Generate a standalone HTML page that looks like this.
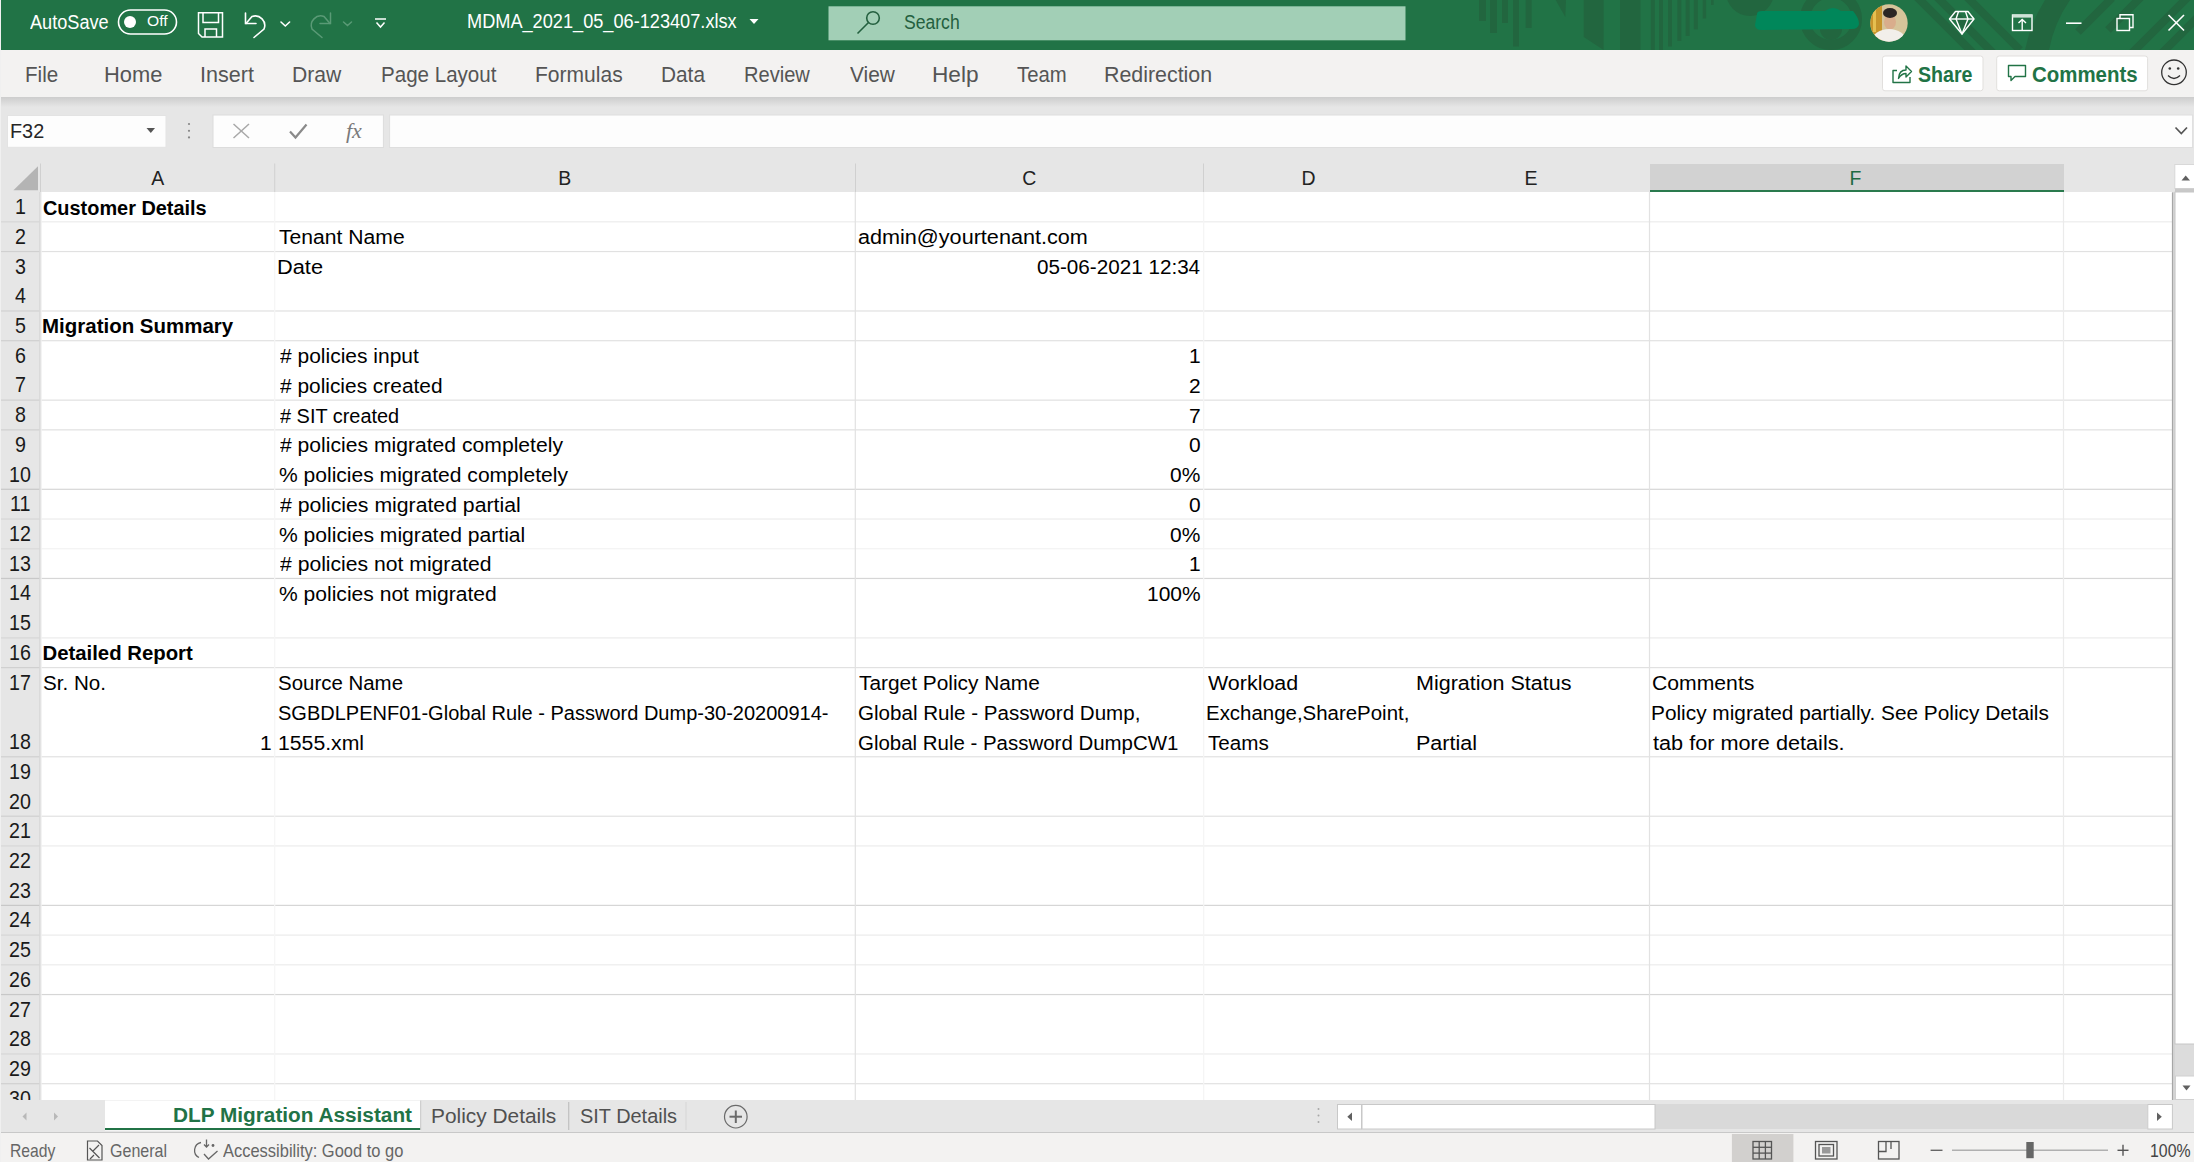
<!DOCTYPE html>
<html><head><meta charset="utf-8">
<style>
html,body{margin:0;padding:0;}
body{width:2194px;height:1162px;overflow:hidden;position:relative;background:#fff;font-family:"Liberation Sans",sans-serif;}
.a{position:absolute;}
.t{position:absolute;white-space:nowrap;line-height:1;transform-origin:0 0;font-family:"Liberation Sans",sans-serif;}
svg{position:absolute;overflow:visible;}
</style></head><body>
<!-- title bar -->
<div class="a" style="left:0;top:0;width:2194px;height:50px;background:#217346"></div>
<div class="a" style="left:0;top:0;width:1px;height:1162px;background:#f0f0f0;z-index:5"></div>
<svg style="left:0;top:0" width="2194" height="50" viewBox="0 0 2194 50">
 <defs><clipPath id="tb"><rect x="0" y="0" width="2194" height="50"/></clipPath></defs>
 <g clip-path="url(#tb)" fill="#22663f">
  <rect x="1479" y="0" width="7" height="21"/>
  <rect x="1490" y="0" width="7" height="33"/>
  <rect x="1502" y="0" width="6" height="23"/>
  <rect x="1513" y="0" width="6" height="46.5"/>
  <rect x="1525.6" y="0" width="6" height="28"/>
  <polygon points="1555.7,0 1566,0 1565.3,17"/>
  <polygon points="1583.7,0 1603.6,0 1603.6,50 1583.7,37"/>
  <rect x="1620" y="0" width="20.5" height="50"/>
  <rect x="1650.8" y="0" width="4" height="50"/>
  <rect x="1659" y="0" width="4" height="50"/>
  <rect x="1668" y="0" width="4" height="46.5"/>
  <rect x="1677.4" y="0" width="4" height="41"/>
  <rect x="1685.6" y="0" width="4" height="36"/>
  <rect x="1693.8" y="0" width="4" height="29.4"/>
  <rect x="1702.7" y="0" width="3.4" height="18.5"/>
  <rect x="1711" y="0" width="2.6" height="5"/>
  <circle cx="1750" cy="-8" r="24"/>
  <circle cx="1831" cy="19" r="26" fill="none" stroke="#22663f" stroke-width="10"/>
  <circle cx="1831" cy="29" r="11"/>
  <path d="M2045,0 A150,150 0 0 0 2025,50 L2049,50 A130,130 0 0 1 2070,0 Z"/>
  <g stroke="#22663f" stroke-width="8" fill="none">
   <line x1="1915" y1="-5" x2="1975" y2="55"/>
   <line x1="1935" y1="-5" x2="1995" y2="55"/>
   <line x1="1960" y1="-10" x2="2020" y2="50"/>
   <line x1="2078" y1="32" x2="2112" y2="-2"/>
   <line x1="2108" y1="30" x2="2145" y2="-7"/>
   <line x1="2130" y1="55" x2="2190" y2="-5"/>
   <line x1="2160" y1="55" x2="2215" y2="0"/>
  </g>
 </g>
 <!-- autosave toggle -->
 <rect x="118.5" y="10" width="58" height="24" rx="12" fill="none" stroke="#fff" stroke-width="1.6"/>
 <circle cx="130" cy="22" r="6" fill="#fff"/>
 <!-- save icon -->
 <g fill="none" stroke="#fff" stroke-width="1.5">
  <path d="M198.5,12.8 H222.5 V37 H202 L198.5,33.5 Z"/>
  <path d="M203,12.8 V22.5 H218.5 V12.8"/>
  <path d="M205,37 V29 H216.5 V37"/>
 </g>
 <!-- undo -->
 <g fill="none" stroke="#fff" stroke-width="1.6" stroke-linecap="round">
  <path d="M246,23.5 L252,16.5 A9.5,9.5 0 0 1 264,29 L254,37.5"/>
  <path d="M245.5,13 V23.5 H256"/>
  <path d="M281,22 L285.3,26 L289.6,22"/>
 </g>
 <g fill="none" stroke="#5a9a76" stroke-width="1.5" stroke-linecap="round">
  <path d="M330,23.5 L324,16.5 A9.5,9.5 0 0 0 312,29 L322,37.5"/>
  <path d="M330.5,13 V23.5 H320"/>
  <path d="M343.5,22 L347.5,25.5 L351.5,22"/>
 </g>
 <g fill="none" stroke="#fff" stroke-width="1.5">
  <path d="M375,19 H386"/>
  <path d="M376.5,22.5 L380.5,27 L384.5,22.5"/>
 </g>
 <!-- filename dropdown -->
 <polygon points="749.5,19 758.5,19 754,24" fill="#fff"/>
 <!-- search box -->
 <rect x="828.5" y="6.3" width="577" height="34" fill="#a2cfb6"/>
 <g fill="none" stroke="#24603f" stroke-width="1.6">
  <circle cx="873" cy="18" r="6.3"/>
  <line x1="868.5" y1="22.5" x2="857.5" y2="33.5"/>
 </g>
 <!-- redacted blob -->
 <path d="M1757,14 Q1757,11 1762,11 L1825,11 Q1833,5 1841,11 L1853,11 Q1859,18 1859,24 Q1858,29 1852,29 L1762,30 Q1755,30 1755,25 Z" fill="#00875a"/>
 <!-- avatar -->
 <defs><clipPath id="av"><circle cx="1889" cy="23" r="18.7"/></clipPath></defs>
 <g clip-path="url(#av)">
  <rect x="1870" y="4" width="38" height="38" fill="#d6c49a"/>
  <rect x="1870" y="4" width="12" height="38" fill="#c7952c"/>
  <rect x="1873" y="10" width="3" height="22" fill="#e6bf50"/>
  <ellipse cx="1890" cy="22" rx="6" ry="7.5" fill="#d9ad8c"/>
  <ellipse cx="1890" cy="13" rx="7" ry="5" fill="#2c2624"/>
  <ellipse cx="1889" cy="41" rx="17" ry="12" fill="#f2efea"/>
 </g>
 <!-- diamond -->
 <g fill="none" stroke="#fff" stroke-width="1.4" stroke-linejoin="round">
  <path d="M1955.5,11.5 H1968 L1974,19 L1962,34 L1949.5,19 Z"/>
  <path d="M1949.5,19 H1974"/>
  <path d="M1958.5,11.5 L1956,19 L1962,34 L1968,19 L1965.5,11.5"/>
 </g>
 <!-- present -->
 <g fill="none" stroke="#fff" stroke-width="1.4">
  <rect x="2012.5" y="15" width="19.5" height="15.5"/>
  <line x1="2022.2" y1="19.5" x2="2022.2" y2="30"/>
  <path d="M2018.5,23 L2022.2,19.5 L2026,23"/>
 </g>
 <rect x="2012.5" y="15" width="19.5" height="2.6" fill="#cfe3d7"/>
 <!-- window controls -->
 <line x1="2066" y1="23.2" x2="2081.5" y2="23.2" stroke="#fff" stroke-width="1.6"/>
 <g fill="none" stroke="#fff" stroke-width="1.4">
  <rect x="2117" y="18.5" width="12.5" height="12"/>
  <path d="M2120,18.5 V14.8 H2133 V27.5 H2129.5"/>
 </g>
 <g stroke="#fff" stroke-width="1.6">
  <line x1="2168.5" y1="15" x2="2184" y2="30.5"/>
  <line x1="2184" y1="15" x2="2168.5" y2="30.5"/>
 </g>
</svg>
<!-- ribbon tabs bar -->
<div class="a" style="left:0;top:50px;width:2194px;height:46.5px;background:#f3f2f1"></div>
<div class="a" style="left:0;top:96.5px;width:2194px;height:96px;background:#e6e6e6"></div>
<div class="a" style="left:0;top:96.5px;width:2194px;height:10px;background:linear-gradient(#cdcdcd,#e6e6e6)"></div>
<svg style="left:0;top:0" width="2194" height="200" viewBox="0 0 2194 200">
 <!-- share button -->
 <rect x="1882.5" y="56" width="100.5" height="34.8" rx="2.5" fill="#fff" stroke="#e1dfdd" stroke-width="1"/>
 <rect x="1996.7" y="56" width="150.9" height="34.8" rx="2.5" fill="#fff" stroke="#e1dfdd" stroke-width="1"/>
 <g fill="none" stroke="#217346" stroke-width="1.4" stroke-linejoin="round">
  <path d="M1897,70.5 H1893 V82.5 H1910 V77"/>
  <path d="M1898.5,78.5 Q1899,70 1906,70 V66 L1911.5,71.5 L1906,77 V73.5 Q1901.5,73.5 1898.5,78.5 Z"/>
  <path d="M2008.5,65.5 H2025.5 V76.5 H2015 L2011,80.5 V76.5 H2008.5 Z"/>
 </g>
 <!-- smiley -->
 <g fill="none" stroke="#333" stroke-width="1.3">
  <circle cx="2174" cy="72.3" r="12.3"/>
  <path d="M2168,75.5 Q2174,81.5 2180,75.5"/>
 </g>
 <circle cx="2169.8" cy="68.5" r="1.3" fill="#333"/>
 <circle cx="2178.2" cy="68.5" r="1.3" fill="#333"/>
 <!-- name box -->
 <rect x="7.5" y="115.5" width="158.5" height="31.8" fill="#fdfdfd" stroke="#e3e3e3" stroke-width="1"/>
 <polygon points="146.5,128 155,128 150.8,133" fill="#555"/>
 <circle cx="189" cy="124" r="1.1" fill="#888"/>
 <circle cx="189" cy="130.8" r="1.1" fill="#888"/>
 <circle cx="189" cy="137.4" r="1.1" fill="#888"/>
 <rect x="213" y="115" width="170.4" height="32.5" fill="#fdfdfd" stroke="#dcdcdc" stroke-width="1"/>
 <g stroke="#a8a8a8" stroke-width="1.5" fill="none">
  <line x1="233.5" y1="124" x2="249" y2="138"/>
  <line x1="249" y1="124" x2="233.5" y2="138"/>
 </g>
 <path d="M290,131.5 L295.5,137.5 L306.5,124.5" stroke="#8a8a8a" stroke-width="2.2" fill="none"/>
 <text x="346" y="138" font-family="Liberation Serif" font-style="italic" font-size="22" fill="#7a7a7a">fx</text>
 <rect x="389.6" y="115" width="1803" height="32.5" fill="#fdfdfd" stroke="#dedede" stroke-width="1"/>
 <path d="M2175.5,127.5 L2181.3,133.5 L2187,127.5" stroke="#555" stroke-width="1.7" fill="none"/>
</svg>
<!-- column header row -->
<div class="a" style="left:1649.5px;top:163.5px;width:414px;height:28.5px;background:#d2d2d2"></div>
<div class="a" style="left:1649.5px;top:190.2px;width:414px;height:2px;background:#2a7a4e"></div>
<div class="a" style="left:1px;top:192px;width:39.5px;height:908px;background:#e6e6e6"></div>
<div class="a" style="left:40.5px;top:192px;width:2131.5px;height:908px;background:#fff"></div>
<svg style="left:0;top:0" width="2194" height="1162" viewBox="0 0 2194 1162">
 <polygon points="38,166.2 38,190.3 13.4,190.3" fill="#b4b4b4"/>
 <g stroke="#d0d0d0" stroke-width="1">
  <line x1="40.5" y1="163.5" x2="40.5" y2="192"/>
  <line x1="274.7" y1="163.5" x2="274.7" y2="192"/>
  <line x1="855.5" y1="163.5" x2="855.5" y2="192"/>
  <line x1="1203.5" y1="163.5" x2="1203.5" y2="192"/>
 </g>
 <rect x="1" y="221.22" width="39.5" height="1.2" fill="#d6d6d6"/>
<rect x="41.5" y="221.22" width="2130.5" height="1.2" fill="#ececec"/>
<rect x="1" y="250.94" width="39.5" height="1.2" fill="#d0d0d0"/>
<rect x="41.5" y="250.94" width="2130.5" height="1.2" fill="#e1e1e1"/>
<rect x="1" y="310.38" width="39.5" height="1.2" fill="#d0d0d0"/>
<rect x="41.5" y="310.38" width="2130.5" height="1.2" fill="#e1e1e1"/>
<rect x="1" y="340.10" width="39.5" height="1.2" fill="#d0d0d0"/>
<rect x="41.5" y="340.10" width="2130.5" height="1.2" fill="#e1e1e1"/>
<rect x="1" y="399.54" width="39.5" height="1.2" fill="#d0d0d0"/>
<rect x="41.5" y="399.54" width="2130.5" height="1.2" fill="#e1e1e1"/>
<rect x="1" y="429.26" width="39.5" height="1.2" fill="#d0d0d0"/>
<rect x="41.5" y="429.26" width="2130.5" height="1.2" fill="#e1e1e1"/>
<rect x="1" y="488.70" width="39.5" height="1.2" fill="#c8c8c8"/>
<rect x="41.5" y="488.70" width="2130.5" height="1.2" fill="#d6d6d6"/>
<rect x="1" y="518.42" width="39.5" height="1.2" fill="#d6d6d6"/>
<rect x="41.5" y="518.42" width="2130.5" height="1.2" fill="#ececec"/>
<rect x="1" y="548.14" width="39.5" height="1.2" fill="#dadada"/>
<rect x="41.5" y="548.14" width="2130.5" height="1.2" fill="#f3f3f3"/>
<rect x="1" y="577.86" width="39.5" height="1.2" fill="#c8c8c8"/>
<rect x="41.5" y="577.86" width="2130.5" height="1.2" fill="#d6d6d6"/>
<rect x="1" y="637.30" width="39.5" height="1.2" fill="#d6d6d6"/>
<rect x="41.5" y="637.30" width="2130.5" height="1.2" fill="#ececec"/>
<rect x="1" y="667.02" width="39.5" height="1.2" fill="#d0d0d0"/>
<rect x="41.5" y="667.02" width="2130.5" height="1.2" fill="#e1e1e1"/>
<rect x="1" y="756.18" width="39.5" height="1.2" fill="#d0d0d0"/>
<rect x="41.5" y="756.18" width="2130.5" height="1.2" fill="#e1e1e1"/>
<rect x="1" y="815.62" width="39.5" height="1.2" fill="#d0d0d0"/>
<rect x="41.5" y="815.62" width="2130.5" height="1.2" fill="#e1e1e1"/>
<rect x="1" y="845.34" width="39.5" height="1.2" fill="#d6d6d6"/>
<rect x="41.5" y="845.34" width="2130.5" height="1.2" fill="#ececec"/>
<rect x="1" y="904.78" width="39.5" height="1.2" fill="#c8c8c8"/>
<rect x="41.5" y="904.78" width="2130.5" height="1.2" fill="#d6d6d6"/>
<rect x="1" y="934.50" width="39.5" height="1.2" fill="#d6d6d6"/>
<rect x="41.5" y="934.50" width="2130.5" height="1.2" fill="#ececec"/>
<rect x="1" y="964.22" width="39.5" height="1.2" fill="#d6d6d6"/>
<rect x="41.5" y="964.22" width="2130.5" height="1.2" fill="#ececec"/>
<rect x="1" y="993.94" width="39.5" height="1.2" fill="#c8c8c8"/>
<rect x="41.5" y="993.94" width="2130.5" height="1.2" fill="#d6d6d6"/>
<rect x="1" y="1053.38" width="39.5" height="1.2" fill="#d6d6d6"/>
<rect x="41.5" y="1053.38" width="2130.5" height="1.2" fill="#ececec"/>
<rect x="1" y="1083.10" width="39.5" height="1.2" fill="#d0d0d0"/>
<rect x="41.5" y="1083.10" width="2130.5" height="1.2" fill="#e1e1e1"/>
<rect x="274.10" y="192" width="1.2" height="908" fill="#f5f5f5"/>
<rect x="854.70" y="192" width="1.2" height="908" fill="#e2e2e2"/>
<rect x="1203.10" y="192" width="1.2" height="908" fill="#f4f4f4"/>
<rect x="1648.90" y="192" width="1.2" height="908" fill="#e2e2e2"/>
<rect x="2062.90" y="192" width="1.2" height="908" fill="#ebebeb"/>
<rect x="39.2" y="192" width="1.3" height="908" fill="#d8d8d8"/>
<rect x="40.5" y="192" width="1" height="908" fill="#e8e8e8"/>
</svg>
<div class="t" style="left:42.80px;top:197.59px;font-size:20.35px;font-weight:bold;color:#000;transform:scaleX(0.9782)">Customer Details</div>
<div class="t" style="left:278.78px;top:227.31px;font-size:20.35px;font-weight:normal;color:#000;transform:scaleX(1.0385)">Tenant Name</div>
<div class="t" style="left:858.14px;top:227.31px;font-size:20.35px;font-weight:normal;color:#000;transform:scaleX(1.0624)">admin@yourtenant.com</div>
<div class="t" style="left:277.46px;top:257.03px;font-size:20.35px;font-weight:normal;color:#000;transform:scaleX(1.0709)">Date</div>
<div class="t" style="left:1037.38px;top:257.03px;font-size:20.35px;font-weight:normal;color:#000;transform:scaleX(1.0155)">05-06-2021 12:34</div>
<div class="t" style="left:42.47px;top:316.47px;font-size:20.35px;font-weight:bold;color:#000;transform:scaleX(1.0068)">Migration Summary</div>
<div class="t" style="left:279.60px;top:346.19px;font-size:20.35px;font-weight:normal;color:#000;transform:scaleX(1.0315)"># policies input</div>
<div class="t" style="left:1189.31px;top:346.19px;font-size:20.35px;font-weight:normal;color:#000;transform:scaleX(1.0300)">1</div>
<div class="t" style="left:279.60px;top:375.91px;font-size:20.35px;font-weight:normal;color:#000;transform:scaleX(1.0266)"># policies created</div>
<div class="t" style="left:1189.31px;top:375.91px;font-size:20.35px;font-weight:normal;color:#000;transform:scaleX(1.0300)">2</div>
<div class="t" style="left:279.60px;top:405.63px;font-size:20.35px;font-weight:normal;color:#000;transform:scaleX(0.9784)"># SIT created</div>
<div class="t" style="left:1189.31px;top:405.63px;font-size:20.35px;font-weight:normal;color:#000;transform:scaleX(1.0300)">7</div>
<div class="t" style="left:279.60px;top:435.35px;font-size:20.35px;font-weight:normal;color:#000;transform:scaleX(1.0383)"># policies migrated completely</div>
<div class="t" style="left:1189.10px;top:435.35px;font-size:20.35px;font-weight:normal;color:#000;transform:scaleX(1.0300)">0</div>
<div class="t" style="left:278.97px;top:465.07px;font-size:20.35px;font-weight:normal;color:#000;transform:scaleX(1.0347)">% policies migrated completely</div>
<div class="t" style="left:1170.32px;top:465.07px;font-size:20.35px;font-weight:normal;color:#000;transform:scaleX(1.0300)">0%</div>
<div class="t" style="left:279.60px;top:494.79px;font-size:20.35px;font-weight:normal;color:#000;transform:scaleX(1.0433)"># policies migrated partial</div>
<div class="t" style="left:1189.10px;top:494.79px;font-size:20.35px;font-weight:normal;color:#000;transform:scaleX(1.0300)">0</div>
<div class="t" style="left:278.97px;top:524.51px;font-size:20.35px;font-weight:normal;color:#000;transform:scaleX(1.0372)">% policies migrated partial</div>
<div class="t" style="left:1170.32px;top:524.51px;font-size:20.35px;font-weight:normal;color:#000;transform:scaleX(1.0300)">0%</div>
<div class="t" style="left:279.60px;top:554.23px;font-size:20.35px;font-weight:normal;color:#000;transform:scaleX(1.0392)"># policies not migrated</div>
<div class="t" style="left:1189.31px;top:554.23px;font-size:20.35px;font-weight:normal;color:#000;transform:scaleX(1.0300)">1</div>
<div class="t" style="left:278.97px;top:583.95px;font-size:20.35px;font-weight:normal;color:#000;transform:scaleX(1.0354)">% policies not migrated</div>
<div class="t" style="left:1147.01px;top:583.95px;font-size:20.35px;font-weight:normal;color:#000;transform:scaleX(1.0300)">100%</div>
<div class="t" style="left:42.48px;top:643.39px;font-size:20.35px;font-weight:bold;color:#000;transform:scaleX(1.0000)">Detailed Report</div>
<div class="t" style="left:42.88px;top:673.11px;font-size:20.35px;font-weight:normal;color:#000;transform:scaleX(1.0118)">Sr. No.</div>
<div class="t" style="left:278.18px;top:673.11px;font-size:20.35px;font-weight:normal;color:#000;transform:scaleX(1.0052)">Source Name</div>
<div class="t" style="left:858.58px;top:673.11px;font-size:20.35px;font-weight:normal;color:#000;transform:scaleX(1.0252)">Target Policy Name</div>
<div class="t" style="left:1208.00px;top:673.11px;font-size:20.35px;font-weight:normal;color:#000;transform:scaleX(1.0541)">Workload</div>
<div class="t" style="left:1415.78px;top:673.11px;font-size:20.35px;font-weight:normal;color:#000;transform:scaleX(1.0574)">Migration Status</div>
<div class="t" style="left:1651.94px;top:673.11px;font-size:20.35px;font-weight:normal;color:#000;transform:scaleX(1.0408)">Comments</div>
<div class="t" style="left:260.01px;top:732.55px;font-size:20.35px;font-weight:normal;color:#000;transform:scaleX(1.0300)">1</div>
<div class="t" style="left:278.20px;top:702.83px;font-size:20.35px;font-weight:normal;color:#000;transform:scaleX(0.9836)">SGBDLPENF01-Global Rule - Password Dump-30-20200914-</div>
<div class="t" style="left:277.51px;top:732.55px;font-size:20.35px;font-weight:normal;color:#000;transform:scaleX(1.0428)">1555.xml</div>
<div class="t" style="left:857.97px;top:702.83px;font-size:20.35px;font-weight:normal;color:#000;transform:scaleX(1.0111)">Global Rule - Password Dump,</div>
<div class="t" style="left:857.98px;top:732.55px;font-size:20.35px;font-weight:normal;color:#000;transform:scaleX(1.0049)">Global Rule - Password DumpCW1</div>
<div class="t" style="left:1206.36px;top:702.83px;font-size:20.35px;font-weight:normal;color:#000;transform:scaleX(1.0046)">Exchange,SharePoint,</div>
<div class="t" style="left:1207.59px;top:732.55px;font-size:20.35px;font-weight:normal;color:#000;transform:scaleX(1.0150)">Teams</div>
<div class="t" style="left:1415.78px;top:732.55px;font-size:20.35px;font-weight:normal;color:#000;transform:scaleX(1.0587)">Partial</div>
<div class="t" style="left:1651.33px;top:702.83px;font-size:20.35px;font-weight:normal;color:#000;transform:scaleX(1.0240)">Policy migrated partially. See Policy Details</div>
<div class="t" style="left:1652.78px;top:732.55px;font-size:20.35px;font-weight:normal;color:#000;transform:scaleX(1.0656)">tab for more details.</div>
<div class="t" style="left:14.60px;top:197.13px;font-size:21.37px;font-weight:normal;color:#1a1a1a;transform:scaleX(0.9200)">1</div>
<div class="t" style="left:14.80px;top:226.85px;font-size:21.37px;font-weight:normal;color:#1a1a1a;transform:scaleX(0.9200)">2</div>
<div class="t" style="left:14.89px;top:256.57px;font-size:21.37px;font-weight:normal;color:#1a1a1a;transform:scaleX(0.9200)">3</div>
<div class="t" style="left:14.89px;top:286.29px;font-size:21.37px;font-weight:normal;color:#1a1a1a;transform:scaleX(0.9200)">4</div>
<div class="t" style="left:14.80px;top:316.01px;font-size:21.37px;font-weight:normal;color:#1a1a1a;transform:scaleX(0.9200)">5</div>
<div class="t" style="left:14.70px;top:345.73px;font-size:21.37px;font-weight:normal;color:#1a1a1a;transform:scaleX(0.9200)">6</div>
<div class="t" style="left:14.80px;top:375.45px;font-size:21.37px;font-weight:normal;color:#1a1a1a;transform:scaleX(0.9200)">7</div>
<div class="t" style="left:14.80px;top:405.17px;font-size:21.37px;font-weight:normal;color:#1a1a1a;transform:scaleX(0.9200)">8</div>
<div class="t" style="left:14.89px;top:434.89px;font-size:21.37px;font-weight:normal;color:#1a1a1a;transform:scaleX(0.9200)">9</div>
<div class="t" style="left:9.04px;top:464.61px;font-size:21.37px;font-weight:normal;color:#1a1a1a;transform:scaleX(0.9200)">10</div>
<div class="t" style="left:9.86px;top:494.33px;font-size:21.37px;font-weight:normal;color:#1a1a1a;transform:scaleX(0.9200)">11</div>
<div class="t" style="left:9.13px;top:524.05px;font-size:21.37px;font-weight:normal;color:#1a1a1a;transform:scaleX(0.9200)">12</div>
<div class="t" style="left:9.04px;top:553.77px;font-size:21.37px;font-weight:normal;color:#1a1a1a;transform:scaleX(0.9200)">13</div>
<div class="t" style="left:8.94px;top:583.49px;font-size:21.37px;font-weight:normal;color:#1a1a1a;transform:scaleX(0.9200)">14</div>
<div class="t" style="left:9.04px;top:613.21px;font-size:21.37px;font-weight:normal;color:#1a1a1a;transform:scaleX(0.9200)">15</div>
<div class="t" style="left:9.04px;top:642.93px;font-size:21.37px;font-weight:normal;color:#1a1a1a;transform:scaleX(0.9200)">16</div>
<div class="t" style="left:9.13px;top:672.65px;font-size:21.37px;font-weight:normal;color:#1a1a1a;transform:scaleX(0.9200)">17</div>
<div class="t" style="left:9.04px;top:732.09px;font-size:21.37px;font-weight:normal;color:#1a1a1a;transform:scaleX(0.9200)">18</div>
<div class="t" style="left:9.13px;top:761.81px;font-size:21.37px;font-weight:normal;color:#1a1a1a;transform:scaleX(0.9200)">19</div>
<div class="t" style="left:9.23px;top:791.53px;font-size:21.37px;font-weight:normal;color:#1a1a1a;transform:scaleX(0.9200)">20</div>
<div class="t" style="left:9.33px;top:821.25px;font-size:21.37px;font-weight:normal;color:#1a1a1a;transform:scaleX(0.9200)">21</div>
<div class="t" style="left:9.33px;top:850.97px;font-size:21.37px;font-weight:normal;color:#1a1a1a;transform:scaleX(0.9200)">22</div>
<div class="t" style="left:9.23px;top:880.69px;font-size:21.37px;font-weight:normal;color:#1a1a1a;transform:scaleX(0.9200)">23</div>
<div class="t" style="left:9.13px;top:910.41px;font-size:21.37px;font-weight:normal;color:#1a1a1a;transform:scaleX(0.9200)">24</div>
<div class="t" style="left:9.23px;top:940.13px;font-size:21.37px;font-weight:normal;color:#1a1a1a;transform:scaleX(0.9200)">25</div>
<div class="t" style="left:9.23px;top:969.85px;font-size:21.37px;font-weight:normal;color:#1a1a1a;transform:scaleX(0.9200)">26</div>
<div class="t" style="left:9.33px;top:999.57px;font-size:21.37px;font-weight:normal;color:#1a1a1a;transform:scaleX(0.9200)">27</div>
<div class="t" style="left:9.23px;top:1029.29px;font-size:21.37px;font-weight:normal;color:#1a1a1a;transform:scaleX(0.9200)">28</div>
<div class="t" style="left:9.33px;top:1059.01px;font-size:21.37px;font-weight:normal;color:#1a1a1a;transform:scaleX(0.9200)">29</div>
<div class="t" style="left:9.43px;top:1088.73px;font-size:21.37px;font-weight:normal;color:#1a1a1a;transform:scaleX(0.9200)">30</div>
<div class="t" style="left:151.28px;top:168.51px;font-size:19.48px;font-weight:normal;color:#222;transform:scaleX(1.0000)">A</div>
<div class="t" style="left:558.18px;top:168.51px;font-size:19.48px;font-weight:normal;color:#222;transform:scaleX(1.0000)">B</div>
<div class="t" style="left:1022.29px;top:168.51px;font-size:19.48px;font-weight:normal;color:#222;transform:scaleX(1.0000)">C</div>
<div class="t" style="left:1301.60px;top:168.51px;font-size:19.48px;font-weight:normal;color:#222;transform:scaleX(1.0000)">D</div>
<div class="t" style="left:1524.59px;top:168.51px;font-size:19.48px;font-weight:normal;color:#222;transform:scaleX(1.0000)">E</div>
<div class="t" style="left:1849.57px;top:168.51px;font-size:19.48px;font-weight:normal;color:#1e6b41;transform:scaleX(1.0000)">F</div>
<!-- vertical scrollbar -->
<svg style="left:0;top:0" width="2194" height="1162" viewBox="0 0 2194 1162">
 <rect x="2172" y="192" width="22" height="908" fill="#dcdcdc"/>
 <line x1="2172.5" y1="192.5" x2="2172.5" y2="1100" stroke="#a6a6a6" stroke-width="1.2"/>
 <line x1="2174" y1="192.5" x2="2174" y2="1100" stroke="#cfcfcf" stroke-width="1.2"/>
 <rect x="2174.8" y="164.5" width="20" height="24" fill="#fff" stroke="#d8d8d8" stroke-width="1"/>
 <polygon points="2181.5,180.5 2190,180.5 2185.7,175.5" fill="#606060"/>
 <rect x="2175" y="188.5" width="20" height="4" fill="#c8c8c8"/>
 <rect x="2175" y="192" width="20" height="852" fill="#fff" stroke="#c6c6c6" stroke-width="1"/>
 <rect x="2175.5" y="1076" width="20" height="23.5" fill="#fff" stroke="#d0d0d0" stroke-width="1"/>
 <polygon points="2182.5,1085.5 2190.5,1085.5 2186.5,1090.5" fill="#606060"/>
 <!-- sheet tab bar -->
 <rect x="0" y="1100" width="2194" height="33" fill="#e6e6e6"/>
 <rect x="105" y="1100.5" width="315.4" height="30" fill="#fff"/>
 <rect x="105" y="1128" width="315.4" height="2" fill="#217346"/>
 <line x1="420.7" y1="1100.5" x2="420.7" y2="1130" stroke="#c8c8c8" stroke-width="1"/>
 <line x1="568.7" y1="1102" x2="568.7" y2="1130" stroke="#c0c0c0" stroke-width="1.2"/>
 <line x1="686" y1="1102" x2="686" y2="1130" stroke="#d6d6d6" stroke-width="1"/>
 <line x1="0" y1="1132.7" x2="2194" y2="1132.7" stroke="#c8c8c8" stroke-width="1.2"/>
 <polygon points="26.5,1112.5 26.5,1120.5 22.5,1116.5" fill="#b8b8b8"/>
 <polygon points="54,1112.5 54,1120.5 58,1116.5" fill="#b8b8b8"/>
 <g stroke="#6a6a6a" fill="none">
  <circle cx="735.8" cy="1116.7" r="11.3" stroke-width="1.2"/>
  <line x1="729.5" y1="1116.7" x2="742" y2="1116.7" stroke-width="2"/>
  <line x1="735.8" y1="1110.5" x2="735.8" y2="1123" stroke-width="2"/>
 </g>
 <!-- horizontal scrollbar -->
 <g fill="#a8a8a8"><circle cx="1318.5" cy="1109" r="1"/><circle cx="1318.5" cy="1115.5" r="1"/><circle cx="1318.5" cy="1122" r="1"/></g>
 <rect x="1337" y="1104" width="810" height="25" fill="#d9d9d9"/>
 <rect x="1337.5" y="1104.5" width="24" height="24.5" fill="#fff" stroke="#c8c8c8" stroke-width="1"/>
 <polygon points="1352,1112.5 1352,1121 1347.3,1116.8" fill="#606060"/>
 <rect x="1362" y="1104.5" width="293" height="24.5" fill="#fff" stroke="#c8c8c8" stroke-width="1"/>
 <rect x="2147.8" y="1104.5" width="24.6" height="24.5" fill="#fff" stroke="#c8c8c8" stroke-width="1"/>
 <polygon points="2157,1112.5 2157,1121 2161.8,1116.8" fill="#606060"/>
 <!-- status bar -->
 <rect x="0" y="1133.4" width="2194" height="29" fill="#f3f2f1"/>
 <rect x="1731.9" y="1134" width="61.5" height="28" fill="#d2d0ce"/>
 <!-- general icon -->
 <g fill="none" stroke="#555" stroke-width="1.2">
  <path d="M87.5,1141 H97.5 L102,1145.5 V1160 H87.5 Z"/>
  <path d="M89.5,1148 L99.5,1158 M93,1151 L99,1145 M90,1159 L94,1155"/>
 </g>
 <!-- accessibility icon -->
 <g fill="none" stroke="#666" stroke-width="1.3">
  <path d="M201,1142.5 A8,8 0 0 0 199,1157.5"/>
  <path d="M206.5,1139.5 V1147 M204,1144.5 L206.5,1147 L209,1144.5"/>
  <path d="M204,1154 L208.5,1159 L217.5,1151"/>
 </g>
 <circle cx="213" cy="1145.5" r="1.4" fill="#666"/>
 <!-- view icons -->
 <g fill="none" stroke="#555" stroke-width="1.3">
  <rect x="1753" y="1141.5" width="18.5" height="17.5"/>
  <line x1="1759.2" y1="1141.5" x2="1759.2" y2="1159"/><line x1="1765.4" y1="1141.5" x2="1765.4" y2="1159"/>
  <line x1="1753" y1="1147.3" x2="1771.5" y2="1147.3"/><line x1="1753" y1="1153.1" x2="1771.5" y2="1153.1"/>
  <rect x="1815.5" y="1141.5" width="21.5" height="17.5"/>
  <rect x="1819" y="1144.5" width="14.5" height="11.5"/>
  <rect x="1878.5" y="1141.5" width="20.5" height="17.5"/>
  <path d="M1878.5,1151.5 H1886 V1141.5 M1891,1141.5 V1149"/>
 </g>
 <rect x="1822" y="1147" width="8.5" height="6.5" fill="#999"/>
 <line x1="1930.6" y1="1150.3" x2="1942.5" y2="1150.3" stroke="#666" stroke-width="1.4"/>
 <line x1="1952" y1="1150.3" x2="2108" y2="1150.3" stroke="#b0b0b0" stroke-width="1.4"/>
 <rect x="2026.3" y="1142" width="7.4" height="16.2" fill="#666"/>
 <line x1="2117.5" y1="1150.3" x2="2128.5" y2="1150.3" stroke="#555" stroke-width="1.4"/>
 <line x1="2123" y1="1144.8" x2="2123" y2="1155.8" stroke="#555" stroke-width="1.4"/>
</svg>
<div class="t" style="left:30.00px;top:12.37px;font-size:20.35px;font-weight:normal;color:#fff;transform:scaleX(0.8914)">AutoSave</div>
<div class="t" style="left:147.37px;top:14.13px;font-size:14.97px;font-weight:normal;color:#fff;transform:scaleX(1.0457)">Off</div>
<div class="t" style="left:467.35px;top:10.62px;font-size:20.06px;font-weight:normal;color:#fff;transform:scaleX(0.9063)">MDMA_2021_05_06-123407.xlsx</div>
<div class="t" style="left:904.30px;top:12.37px;font-size:20.35px;font-weight:normal;color:#24603f;transform:scaleX(0.8638)">Search</div>
<div class="t" style="left:25.15px;top:63.80px;font-size:22.09px;font-weight:normal;color:#555555;transform:scaleX(0.9324)">File</div>
<div class="t" style="left:103.75px;top:63.80px;font-size:22.09px;font-weight:normal;color:#555555;transform:scaleX(0.9899)">Home</div>
<div class="t" style="left:199.66px;top:63.80px;font-size:22.09px;font-weight:normal;color:#555555;transform:scaleX(0.9754)">Insert</div>
<div class="t" style="left:292.31px;top:63.80px;font-size:22.09px;font-weight:normal;color:#555555;transform:scaleX(0.9568)">Draw</div>
<div class="t" style="left:380.75px;top:63.80px;font-size:22.09px;font-weight:normal;color:#555555;transform:scaleX(0.9309)">Page Layout</div>
<div class="t" style="left:534.92px;top:63.80px;font-size:22.09px;font-weight:normal;color:#555555;transform:scaleX(0.9527)">Formulas</div>
<div class="t" style="left:660.93px;top:63.80px;font-size:22.09px;font-weight:normal;color:#555555;transform:scaleX(0.9425)">Data</div>
<div class="t" style="left:744.39px;top:63.80px;font-size:22.09px;font-weight:normal;color:#555555;transform:scaleX(0.9090)">Review</div>
<div class="t" style="left:850.00px;top:63.80px;font-size:22.09px;font-weight:normal;color:#555555;transform:scaleX(0.9442)">View</div>
<div class="t" style="left:932.19px;top:63.80px;font-size:22.09px;font-weight:normal;color:#555555;transform:scaleX(1.0263)">Help</div>
<div class="t" style="left:1016.59px;top:63.80px;font-size:22.09px;font-weight:normal;color:#555555;transform:scaleX(0.9197)">Team</div>
<div class="t" style="left:1103.79px;top:63.80px;font-size:22.09px;font-weight:normal;color:#555555;transform:scaleX(0.9684)">Redirection</div>
<div class="t" style="left:1917.61px;top:63.54px;font-size:21.80px;font-weight:bold;color:#217346;transform:scaleX(0.8995)">Share</div>
<div class="t" style="left:2031.58px;top:63.54px;font-size:21.80px;font-weight:bold;color:#217346;transform:scaleX(0.9378)">Comments</div>
<div class="t" style="left:10.11px;top:120.72px;font-size:20.06px;font-weight:normal;color:#262626;transform:scaleX(0.9896)">F32</div>
<div class="t" style="left:173.05px;top:1105.47px;font-size:20.35px;font-weight:bold;color:#217346;transform:scaleX(1.0215)">DLP Migration Assistant</div>
<div class="t" style="left:431.33px;top:1105.06px;font-size:21.08px;font-weight:normal;color:#505050;transform:scaleX(0.9905)">Policy Details</div>
<div class="t" style="left:579.80px;top:1105.06px;font-size:21.08px;font-weight:normal;color:#505050;transform:scaleX(0.9450)">SIT Details</div>
<div class="t" style="left:10.04px;top:1142.25px;font-size:18.60px;font-weight:normal;color:#666;transform:scaleX(0.8434)">Ready</div>
<div class="t" style="left:109.90px;top:1142.25px;font-size:18.60px;font-weight:normal;color:#666;transform:scaleX(0.8627)">General</div>
<div class="t" style="left:222.50px;top:1142.25px;font-size:18.60px;font-weight:normal;color:#666;transform:scaleX(0.8860)">Accessibility: Good to go</div>
<div class="t" style="left:2149.89px;top:1142.22px;font-size:18.17px;font-weight:normal;color:#444;transform:scaleX(0.8731)">100%</div>
</body></html>
